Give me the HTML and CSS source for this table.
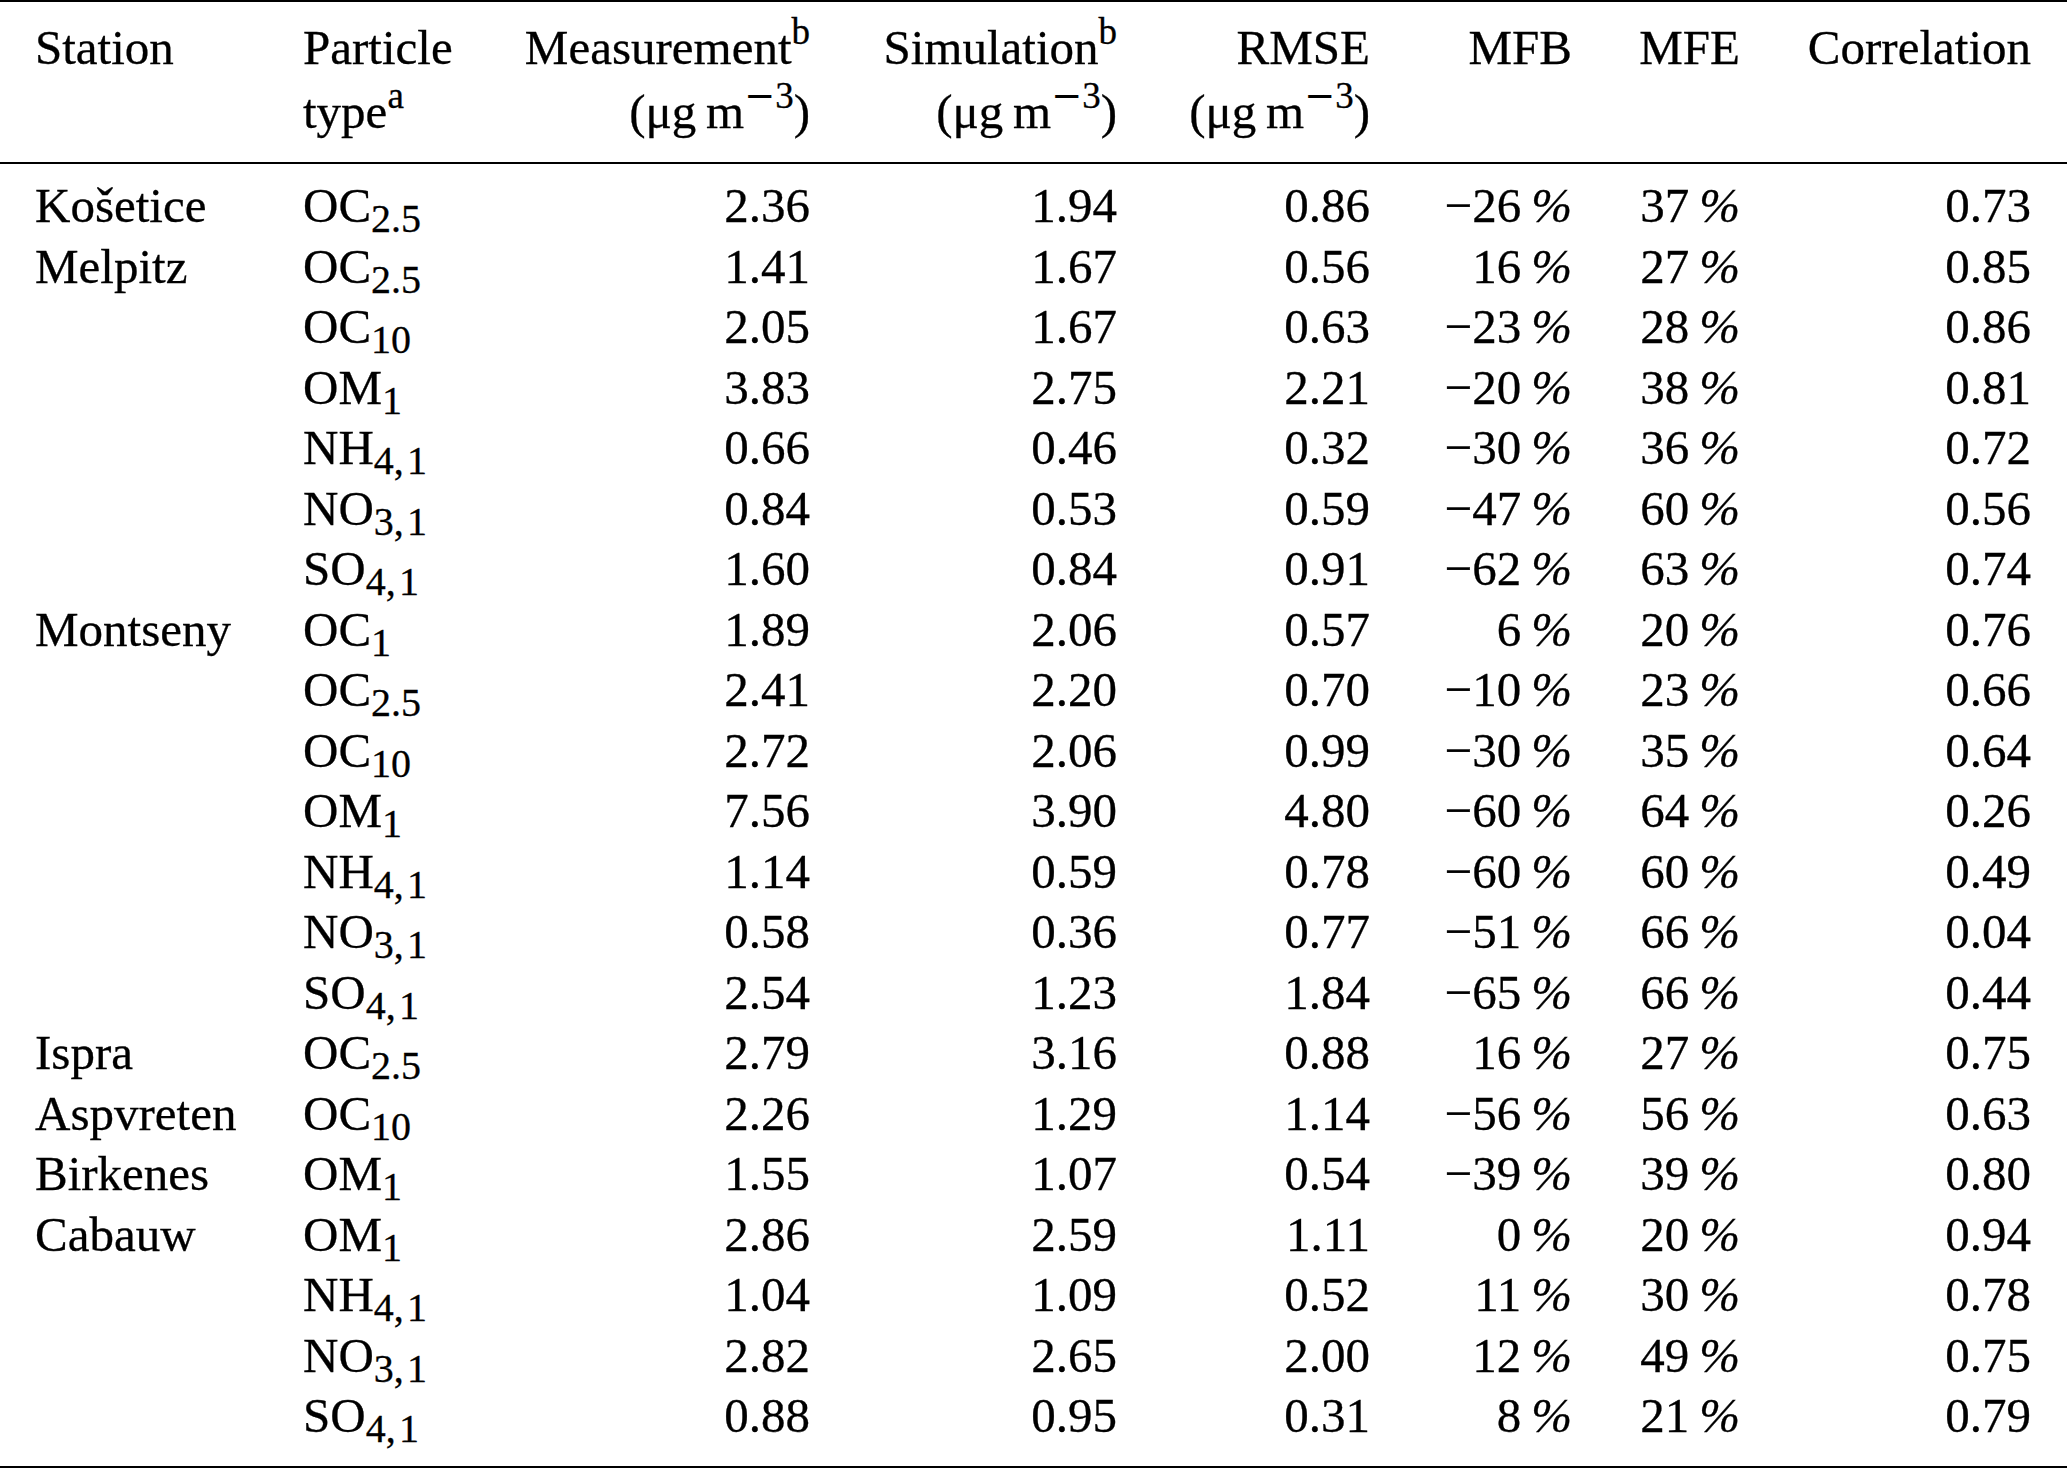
FILE: index.html
```html
<!DOCTYPE html>
<html lang="en">
<head>
<meta charset="utf-8">
<title>Station comparison table</title>
<link rel="stylesheet" href="styles.css">
</head>
<body>
<table class="data">
  <colgroup>
    <col class="w1"><col class="w2"><col class="w3"><col class="w4">
    <col class="w5"><col class="w6"><col class="w7"><col class="w8">
  </colgroup>
  <thead>
    <tr>
      <th class="first">Station</th>
      <th class="left">Particle<br>type<sup>a</sup></th>
      <th>Measurement<sup>b</sup><br>(μg&#8201;m<sup><span class="mminus">−</span>3</sup>)</th>
      <th>Simulation<sup>b</sup><br>(μg&#8201;m<sup><span class="mminus">−</span>3</sup>)</th>
      <th>RMSE<br>(μg&#8201;m<sup><span class="mminus">−</span>3</sup>)</th>
      <th>MFB</th>
      <th>MFE</th>
      <th class="last">Correlation</th>
    </tr>
  </thead>
  <tbody>
    <tr><td class="first">Košetice</td><td class="left">OC<sub>2.5</sub></td><td>2.36</td><td>1.94</td><td>0.86</td><td>−26&#8201;<span class="pct">%</span></td><td>37&#8201;<span class="pct">%</span></td><td class="last">0.73</td></tr>
    <tr><td class="first">Melpitz</td><td class="left">OC<sub>2.5</sub></td><td>1.41</td><td>1.67</td><td>0.56</td><td>16&#8201;<span class="pct">%</span></td><td>27&#8201;<span class="pct">%</span></td><td class="last">0.85</td></tr>
    <tr><td class="first"></td><td class="left">OC<sub>10</sub></td><td>2.05</td><td>1.67</td><td>0.63</td><td>−23&#8201;<span class="pct">%</span></td><td>28&#8201;<span class="pct">%</span></td><td class="last">0.86</td></tr>
    <tr><td class="first"></td><td class="left">OM<sub>1</sub></td><td>3.83</td><td>2.75</td><td>2.21</td><td>−20&#8201;<span class="pct">%</span></td><td>38&#8201;<span class="pct">%</span></td><td class="last">0.81</td></tr>
    <tr><td class="first"></td><td class="left">NH<sub>4,&#8202;1</sub></td><td>0.66</td><td>0.46</td><td>0.32</td><td>−30&#8201;<span class="pct">%</span></td><td>36&#8201;<span class="pct">%</span></td><td class="last">0.72</td></tr>
    <tr><td class="first"></td><td class="left">NO<sub>3,&#8202;1</sub></td><td>0.84</td><td>0.53</td><td>0.59</td><td>−47&#8201;<span class="pct">%</span></td><td>60&#8201;<span class="pct">%</span></td><td class="last">0.56</td></tr>
    <tr><td class="first"></td><td class="left">SO<sub>4,&#8202;1</sub></td><td>1.60</td><td>0.84</td><td>0.91</td><td>−62&#8201;<span class="pct">%</span></td><td>63&#8201;<span class="pct">%</span></td><td class="last">0.74</td></tr>
    <tr><td class="first">Montseny</td><td class="left">OC<sub>1</sub></td><td>1.89</td><td>2.06</td><td>0.57</td><td>6&#8201;<span class="pct">%</span></td><td>20&#8201;<span class="pct">%</span></td><td class="last">0.76</td></tr>
    <tr><td class="first"></td><td class="left">OC<sub>2.5</sub></td><td>2.41</td><td>2.20</td><td>0.70</td><td>−10&#8201;<span class="pct">%</span></td><td>23&#8201;<span class="pct">%</span></td><td class="last">0.66</td></tr>
    <tr><td class="first"></td><td class="left">OC<sub>10</sub></td><td>2.72</td><td>2.06</td><td>0.99</td><td>−30&#8201;<span class="pct">%</span></td><td>35&#8201;<span class="pct">%</span></td><td class="last">0.64</td></tr>
    <tr><td class="first"></td><td class="left">OM<sub>1</sub></td><td>7.56</td><td>3.90</td><td>4.80</td><td>−60&#8201;<span class="pct">%</span></td><td>64&#8201;<span class="pct">%</span></td><td class="last">0.26</td></tr>
    <tr><td class="first"></td><td class="left">NH<sub>4,&#8202;1</sub></td><td>1.14</td><td>0.59</td><td>0.78</td><td>−60&#8201;<span class="pct">%</span></td><td>60&#8201;<span class="pct">%</span></td><td class="last">0.49</td></tr>
    <tr><td class="first"></td><td class="left">NO<sub>3,&#8202;1</sub></td><td>0.58</td><td>0.36</td><td>0.77</td><td>−51&#8201;<span class="pct">%</span></td><td>66&#8201;<span class="pct">%</span></td><td class="last">0.04</td></tr>
    <tr><td class="first"></td><td class="left">SO<sub>4,&#8202;1</sub></td><td>2.54</td><td>1.23</td><td>1.84</td><td>−65&#8201;<span class="pct">%</span></td><td>66&#8201;<span class="pct">%</span></td><td class="last">0.44</td></tr>
    <tr><td class="first">Ispra</td><td class="left">OC<sub>2.5</sub></td><td>2.79</td><td>3.16</td><td>0.88</td><td>16&#8201;<span class="pct">%</span></td><td>27&#8201;<span class="pct">%</span></td><td class="last">0.75</td></tr>
    <tr><td class="first">Aspvreten</td><td class="left">OC<sub>10</sub></td><td>2.26</td><td>1.29</td><td>1.14</td><td>−56&#8201;<span class="pct">%</span></td><td>56&#8201;<span class="pct">%</span></td><td class="last">0.63</td></tr>
    <tr><td class="first">Birkenes</td><td class="left">OM<sub>1</sub></td><td>1.55</td><td>1.07</td><td>0.54</td><td>−39&#8201;<span class="pct">%</span></td><td>39&#8201;<span class="pct">%</span></td><td class="last">0.80</td></tr>
    <tr><td class="first">Cabauw</td><td class="left">OM<sub>1</sub></td><td>2.86</td><td>2.59</td><td>1.11</td><td>0&#8201;<span class="pct">%</span></td><td>20&#8201;<span class="pct">%</span></td><td class="last">0.94</td></tr>
    <tr><td class="first"></td><td class="left">NH<sub>4,&#8202;1</sub></td><td>1.04</td><td>1.09</td><td>0.52</td><td>11&#8201;<span class="pct">%</span></td><td>30&#8201;<span class="pct">%</span></td><td class="last">0.78</td></tr>
    <tr><td class="first"></td><td class="left">NO<sub>3,&#8202;1</sub></td><td>2.82</td><td>2.65</td><td>2.00</td><td>12&#8201;<span class="pct">%</span></td><td>49&#8201;<span class="pct">%</span></td><td class="last">0.75</td></tr>
    <tr><td class="first"></td><td class="left">SO<sub>4,&#8202;1</sub></td><td>0.88</td><td>0.95</td><td>0.31</td><td>8&#8201;<span class="pct">%</span></td><td>21&#8201;<span class="pct">%</span></td><td class="last">0.79</td></tr>
  </tbody>
</table>
</body>
</html>
```

FILE: styles.css
```css
html, body {
  margin: 0;
  padding: 0;
  background: #ffffff;
}

body {
  font-family: "Liberation Serif", "Times New Roman", serif;
  font-size: 49px;
  color: #000000;
  -webkit-text-stroke: 0.3px #000000;
}

.data {
  width: 2067px;
  table-layout: fixed;
  border-collapse: collapse;
  border-spacing: 0;
  border-top: 2px solid #000;
  border-bottom: 2px solid #000;
}

.w1 { width: 303px; }
.w2 { width: 177px; }
.w3 { width: 330px; }
.w4 { width: 307px; }
.w5 { width: 253px; }
.w6 { width: 202px; }
.w7 { width: 168px; }
.w8 { width: 327px; }

.data th,
.data td {
  padding: 0;
  text-align: right;
  white-space: nowrap;
  font-weight: normal;
  vertical-align: top;
}

.data thead th {
  line-height: 64px;
  padding-top: 14px;
  padding-bottom: 18px;
  border-bottom: 2px solid #000;
}

.data td {
  line-height: 60.5px;
}

.data tbody tr:first-child td {
  padding-top: 12px;
}

.data tbody tr:last-child td {
  padding-bottom: 19px;
}

.data .first {
  text-align: left;
  padding-left: 35px;
}

.data .left {
  text-align: left;
}

.data .last {
  padding-right: 36px;
}

.pct {
  font-style: italic;
}

.mminus {
  font-family: "DejaVu Serif", "Liberation Serif", serif;
  -webkit-text-stroke: 0;
}

sub {
  font-size: 40px;
  line-height: 0;
  vertical-align: -10px;
}

sup {
  font-size: 37px;
  line-height: 0;
  vertical-align: 20px;
}
```
